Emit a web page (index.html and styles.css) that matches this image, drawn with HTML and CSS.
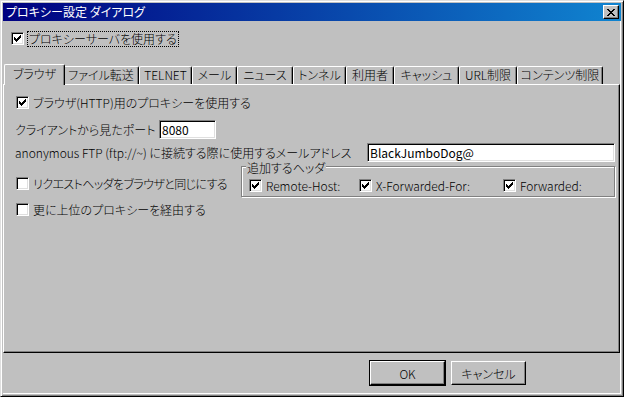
FILE: index.html
```html
<!DOCTYPE html>
<html lang="ja">
<head>
  <meta charset="UTF-8">
  <title>プロキシー設定 ダイアログ</title>
  <link rel="stylesheet" href="styles.css">
</head>
<body>
  <div class="window">
    <div class="titlebar">
      <span class="title">プロキシー設定 ダイアログ</span>
      <button class="close" type="button">
        <svg width="8" height="7" viewBox="0 0 8 7" shape-rendering="crispEdges"><path d="M0 0h2v1H0z M6 0h2v1H6z M1 1h2v1H1z M5 1h2v1H5z M2 2h4v1H2z M3 3h2v1H3z M2 4h4v1H2z M1 5h2v1H1z M5 5h2v1H5z M0 6h2v1H0z M6 6h2v1H6z" fill="#000"/></svg>
      </button>
    </div>
    <div class="client">
      <label class="check top-check">
        <span class="box on"></span>
        <span class="focus">プロキシーサーバを使用する</span>
      </label>

      <div class="tabs">
        <span class="tab active">ブラウザ</span>
        <span class="tab">ファイル転送</span>
        <span class="tab">TELNET</span>
        <span class="tab">メール</span>
        <span class="tab">ニュース</span>
        <span class="tab">トンネル</span>
        <span class="tab">利用者</span>
        <span class="tab">キャッシュ</span>
        <span class="tab">URL制限</span>
        <span class="tab">コンテンツ制限</span>
      </div>

      <div class="panel">
        <label class="check row-first">
          <span class="box on"></span>
          <span>ブラウザ(HTTP)用のプロキシーを使用する</span>
        </label>

        <div class="field port-row">
          <span class="caption port-caption">クライアントから見たポート</span>
          <input class="edit port" type="text" value="8080">
        </div>

        <div class="field ftp-row">
          <span class="caption ftp-caption">anonymous FTP (ftp://~) に接続する際に使用するメールアドレス</span>
          <input class="edit mail" type="text" value="BlackJumboDog@">
        </div>

        <div class="header-row">
          <label class="check same-check">
            <span class="box"></span>
            <span class="tight">リクエストヘッダをブラウザと同じにする</span>
          </label>
          <div class="group">
            <span class="group-label">追加するヘッダ</span>
            <label class="check item remote"><span class="box on"></span><span>Remote-Host:</span></label>
            <label class="check item xff"><span class="box on"></span><span>X-Forwarded-For:</span></label>
            <label class="check item"><span class="box on"></span><span>Forwarded:</span></label>
          </div>
        </div>

        <label class="check row-last">
          <span class="box"></span>
          <span>更に上位のプロキシーを経由する</span>
        </label>
      </div>

      <div class="buttons">
        <button class="btn default" type="button">OK</button>
        <button class="btn" type="button">キャンセル</button>
      </div>
    </div>
  </div>
</body>
</html>
```

FILE: styles.css
```css
body {
  margin: 0;
  padding: 0;
  background: #c0c0c0;
  font-family: "Noto Sans CJK JP", "Liberation Sans", sans-serif;
  font-size: 12px;
  font-weight: 300;
  font-feature-settings: "palt";
  color: #000;
}
.window {
  box-sizing: border-box;
  width: 624px;
  height: 397px;
  padding: 2px;
  background: #c0c0c0;
  border: 1px solid;
  border-color: #dfdfdf #000 #000 #dfdfdf;
  box-shadow: inset 1px 1px #fff, inset -1px -1px #808080;
  display: flex;
  flex-direction: column;
}
.titlebar {
  height: 18px;
  padding: 0 2px 0 3px;
  background: linear-gradient(to right, #000080, #1084d0);
  display: flex;
  align-items: center;
  justify-content: space-between;
}
.title {
  color: #fff;
  line-height: 18px;
  font-weight: 400;
}
.close {
  box-sizing: border-box;
  width: 16px;
  height: 14px;
  padding: 0;
  background: #c0c0c0;
  border: 1px solid;
  border-color: #fff #000 #000 #fff;
  box-shadow: inset -1px -1px #808080;
  display: flex;
  align-items: center;
  justify-content: center;
}
.client {
  flex: 1;
  display: flex;
  flex-direction: column;
  border-right: 1px solid #fff;
  border-bottom: 1px solid #fff;
}

/* checkboxes */
.check {
  display: flex;
  align-items: center;
  gap: 4px;
  height: 13px;
  line-height: 13px;
  white-space: nowrap;
}
.box {
  box-sizing: border-box;
  width: 13px;
  height: 13px;
  flex: none;
  background: #fff;
  border: 1px solid;
  border-color: #808080 #fff #fff #808080;
  box-shadow: inset 1px 1px #000, inset -1px -1px #dfdfdf;
}
.box.on {
  background: #fff url("data:image/svg+xml,%3Csvg xmlns='http://www.w3.org/2000/svg' width='7' height='7' shape-rendering='crispEdges'%3E%3Cpath d='M0 2h1v3H0z M1 3h1v3H1z M2 4h1v3H2z M3 3h1v3H3z M4 2h1v3H4z M5 1h1v3H5z M6 0h1v3H6z'/%3E%3C/svg%3E") no-repeat 2px 2px;
}
.top-check {
  margin: 11px 0 0 8px;
}
.focus {
  padding: 0 1px;
  line-height: 14px;
  outline: 1px dotted #000;
}

/* tabs */
.tabs {
  display: flex;
  align-items: flex-end;
  height: 20px;
  margin-top: 19px;
  padding-left: 3px;
  position: relative;
  z-index: 1;
}
.tab {
  box-sizing: border-box;
  height: 18px;
  line-height: 16px;
  text-align: center;
  border: 1px solid #fff;
  border-right-color: #000;
  border-bottom: none;
  border-radius: 2px 2px 0 0;
  box-shadow: inset -1px 0 #808080;
  white-space: nowrap;
}
.tab:nth-child(1) { width: 57px; }
.tab:nth-child(2) { width: 76px; }
.tab:nth-child(3) { width: 53px; }
.tab:nth-child(4) { width: 45px; }
.tab:nth-child(5) { width: 56px; }
.tab:nth-child(6) { width: 53px; }
.tab:nth-child(7) { width: 48px; }
.tab:nth-child(8) { width: 65px; }
.tab:nth-child(9) { width: 58px; }
.tab:nth-child(10) { width: 86px; }
.tab.active {
  height: 21px;
  width: 61px;
  margin: 0 -2px -1px -2px;
  line-height: 18px;
  background: #c0c0c0;
  position: relative;
  z-index: 2;
}

/* page */
.panel {
  box-sizing: border-box;
  height: 269px;
  padding: 11px 4px 0 11px;
  border: 1px solid;
  border-color: #fff #000 #000 #fff;
  box-shadow: inset -1px -1px #808080;
  display: flex;
  flex-direction: column;
}
.row-first {
  margin-left: 1px;
}
.field {
  display: flex;
  align-items: center;
  height: 19px;
  white-space: nowrap;
}
.caption {
  line-height: 13px;
  flex: none;
}
.port-caption {
  width: 144px;
}
.ftp-caption {
  width: 352px;
}
.port-row {
  margin-top: 11px;
}
.ftp-row {
  margin-top: 4px;
}
.edit {
  box-sizing: border-box;
  flex: none;
  height: 19px;
  margin: 0;
  padding: 0 2px;
  font: inherit;
  font-weight: 400;
  color: #000;
  background: #fff;
  border: 1px solid;
  border-color: #808080 #fff #fff #808080;
  box-shadow: inset 1px 1px #000, inset -1px -1px #dfdfdf;
  outline: none;
}
.port {
  width: 57px;
}
.mail {
  width: 248px;
}
.header-row {
  display: flex;
  height: 31px;
  margin-top: 4px;
}
.same-check {
  width: 225px;
  flex: none;
  margin: 11px 0 0 1px;
}
.tight {
  letter-spacing: -0.6px;
}
.group {
  box-sizing: border-box;
  flex: none;
  width: 374px;
  height: 31px;
  padding: 12px 0 0 7px;
  border: 1px solid #808080;
  box-shadow: inset 1px 1px #fff, 1px 1px #fff;
  display: flex;
  align-items: flex-start;
  position: relative;
}
.group-label {
  position: absolute;
  top: -5px;
  left: 4px;
  padding: 0 1px;
  line-height: 12px;
  background: #c0c0c0;
}
.item.remote { width: 110px; }
.item.xff { width: 144px; }
.row-last {
  margin: 6px 0 0 1px;
}

/* buttons */
.buttons {
  display: flex;
  justify-content: flex-end;
  gap: 6px;
  padding: 8px 94px 0 0;
}
.btn {
  box-sizing: border-box;
  width: 75px;
  height: 24px;
  padding: 0;
  font: inherit;
  color: #000;
  background: #c0c0c0;
  border: 1px solid;
  border-color: #fff #000 #000 #fff;
  box-shadow: inset -1px -1px #808080;
}
.btn.default {
  outline: 1px solid #000;
}
```
